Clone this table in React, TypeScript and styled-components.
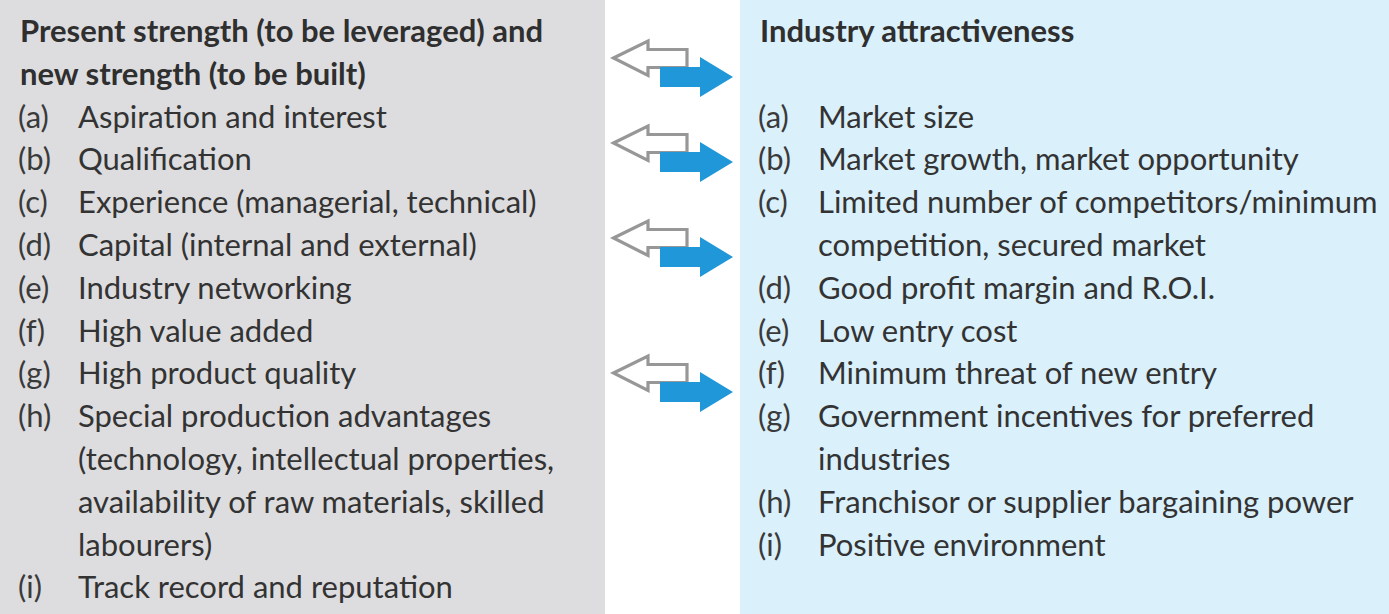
import React from 'react'
import styled, { createGlobalStyle } from 'styled-components'

const GlobalStyle = createGlobalStyle`
  html, body {
    margin: 0;
    padding: 0;
    background: #ffffff;
  }
  body {
    font-family: Lato, 'Noto Sans', sans-serif;
    color: #333333;
  }
`

const Page = styled.div`
  display: grid;
  grid-template-columns: 605px 135px 1fr;
  width: 1389px;
  height: 614px;
  overflow: hidden;
`

const Panel = styled.section<{ $tone: 'grey' | 'blue' }>`
  background: ${(p) => (p.$tone === 'grey' ? '#dddddf' : '#daf0fb')};
  padding: 9px 0 0 18px;
  font-size: 31px;
  line-height: 42.8px;
`

const Heading = styled.h2`
  margin: 0;
  min-height: 85.6px;
  font-size: 31px;
  font-weight: 700;
  line-height: 42.8px;
  padding-left: 2px;
  white-space: pre;
  color: #2f2f2f;
`

const List = styled.ol`
  list-style: none;
  margin: 0;
  padding: 0;
`

const Item = styled.li`
  display: grid;
  grid-template-columns: 60px 1fr;
`

const Label = styled.span`
  color: #3a3a3a;
`

const Text = styled.span`
  white-space: pre;
`

const ArrowColumn = styled.div`
  display: flex;
  flex-direction: column;
  padding-left: 5px;
`

const ArrowSvg = styled.svg<{ $top: number }>`
  display: block;
  width: 125px;
  height: 62px;
  margin-top: ${(p) => p.$top}px;
`

const ExchangeArrow = ({ top }: { top: number }) => (
  <ArrowSvg $top={top} viewBox="0 0 125 62">
    <polygon
      points="3.5,21 38,4 38,12.5 77,12.5 77,30.5 38,30.5 38,38.5"
      fill="#ffffff"
      stroke="#979797"
      strokeWidth="3.2"
      strokeLinejoin="miter"
    />
    <polygon points="50,30 90,30 90,20 123,40 90,60 90,50 50,50" fill="#1f97d9" />
  </ArrowSvg>
)

const strengths: [string, string][] = [
  ['(a)', 'Aspiration and interest'],
  ['(b)', 'Qualification'],
  ['(c)', 'Experience (managerial, technical)'],
  ['(d)', 'Capital (internal and external)'],
  ['(e)', 'Industry networking'],
  ['(f)', 'High value added'],
  ['(g)', 'High product quality'],
  [
    '(h)',
    'Special production advantages\n(technology, intellectual properties,\navailability of raw materials, skilled\nlabourers)',
  ],
  ['(i)', 'Track record and reputation'],
]

const attractiveness: [string, string][] = [
  ['(a)', 'Market size'],
  ['(b)', 'Market growth, market opportunity'],
  ['(c)', 'Limited number of competitors/minimum\ncompetition, secured market'],
  ['(d)', 'Good profit margin and R.O.I.'],
  ['(e)', 'Low entry cost'],
  ['(f)', 'Minimum threat of new entry'],
  ['(g)', 'Government incentives for preferred\nindustries'],
  ['(h)', 'Franchisor or supplier bargaining power'],
  ['(i)', 'Positive environment'],
]

const ItemList = ({ items }: { items: [string, string][] }) => (
  <List>
    {items.map(([label, text]) => (
      <Item key={label}>
        <Label>{label}</Label>
        <Text>{text}</Text>
      </Item>
    ))}
  </List>
)

export default function App() {
  return (
    <>
      <GlobalStyle />
      <Page>
        <Panel $tone="grey">
          <Heading>{'Present strength (to be leveraged) and\nnew strength (to be built)'}</Heading>
          <ItemList items={strengths} />
        </Panel>

        {/* arrows between the two columns */}
        <ArrowColumn>
          <ExchangeArrow top={37} />
          <ExchangeArrow top={23} />
          <ExchangeArrow top={33} />
          <ExchangeArrow top={73} />
        </ArrowColumn>

        <Panel $tone="blue">
          <Heading>Industry attractiveness</Heading>
          <ItemList items={attractiveness} />
        </Panel>
      </Page>
    </>
  )
}
